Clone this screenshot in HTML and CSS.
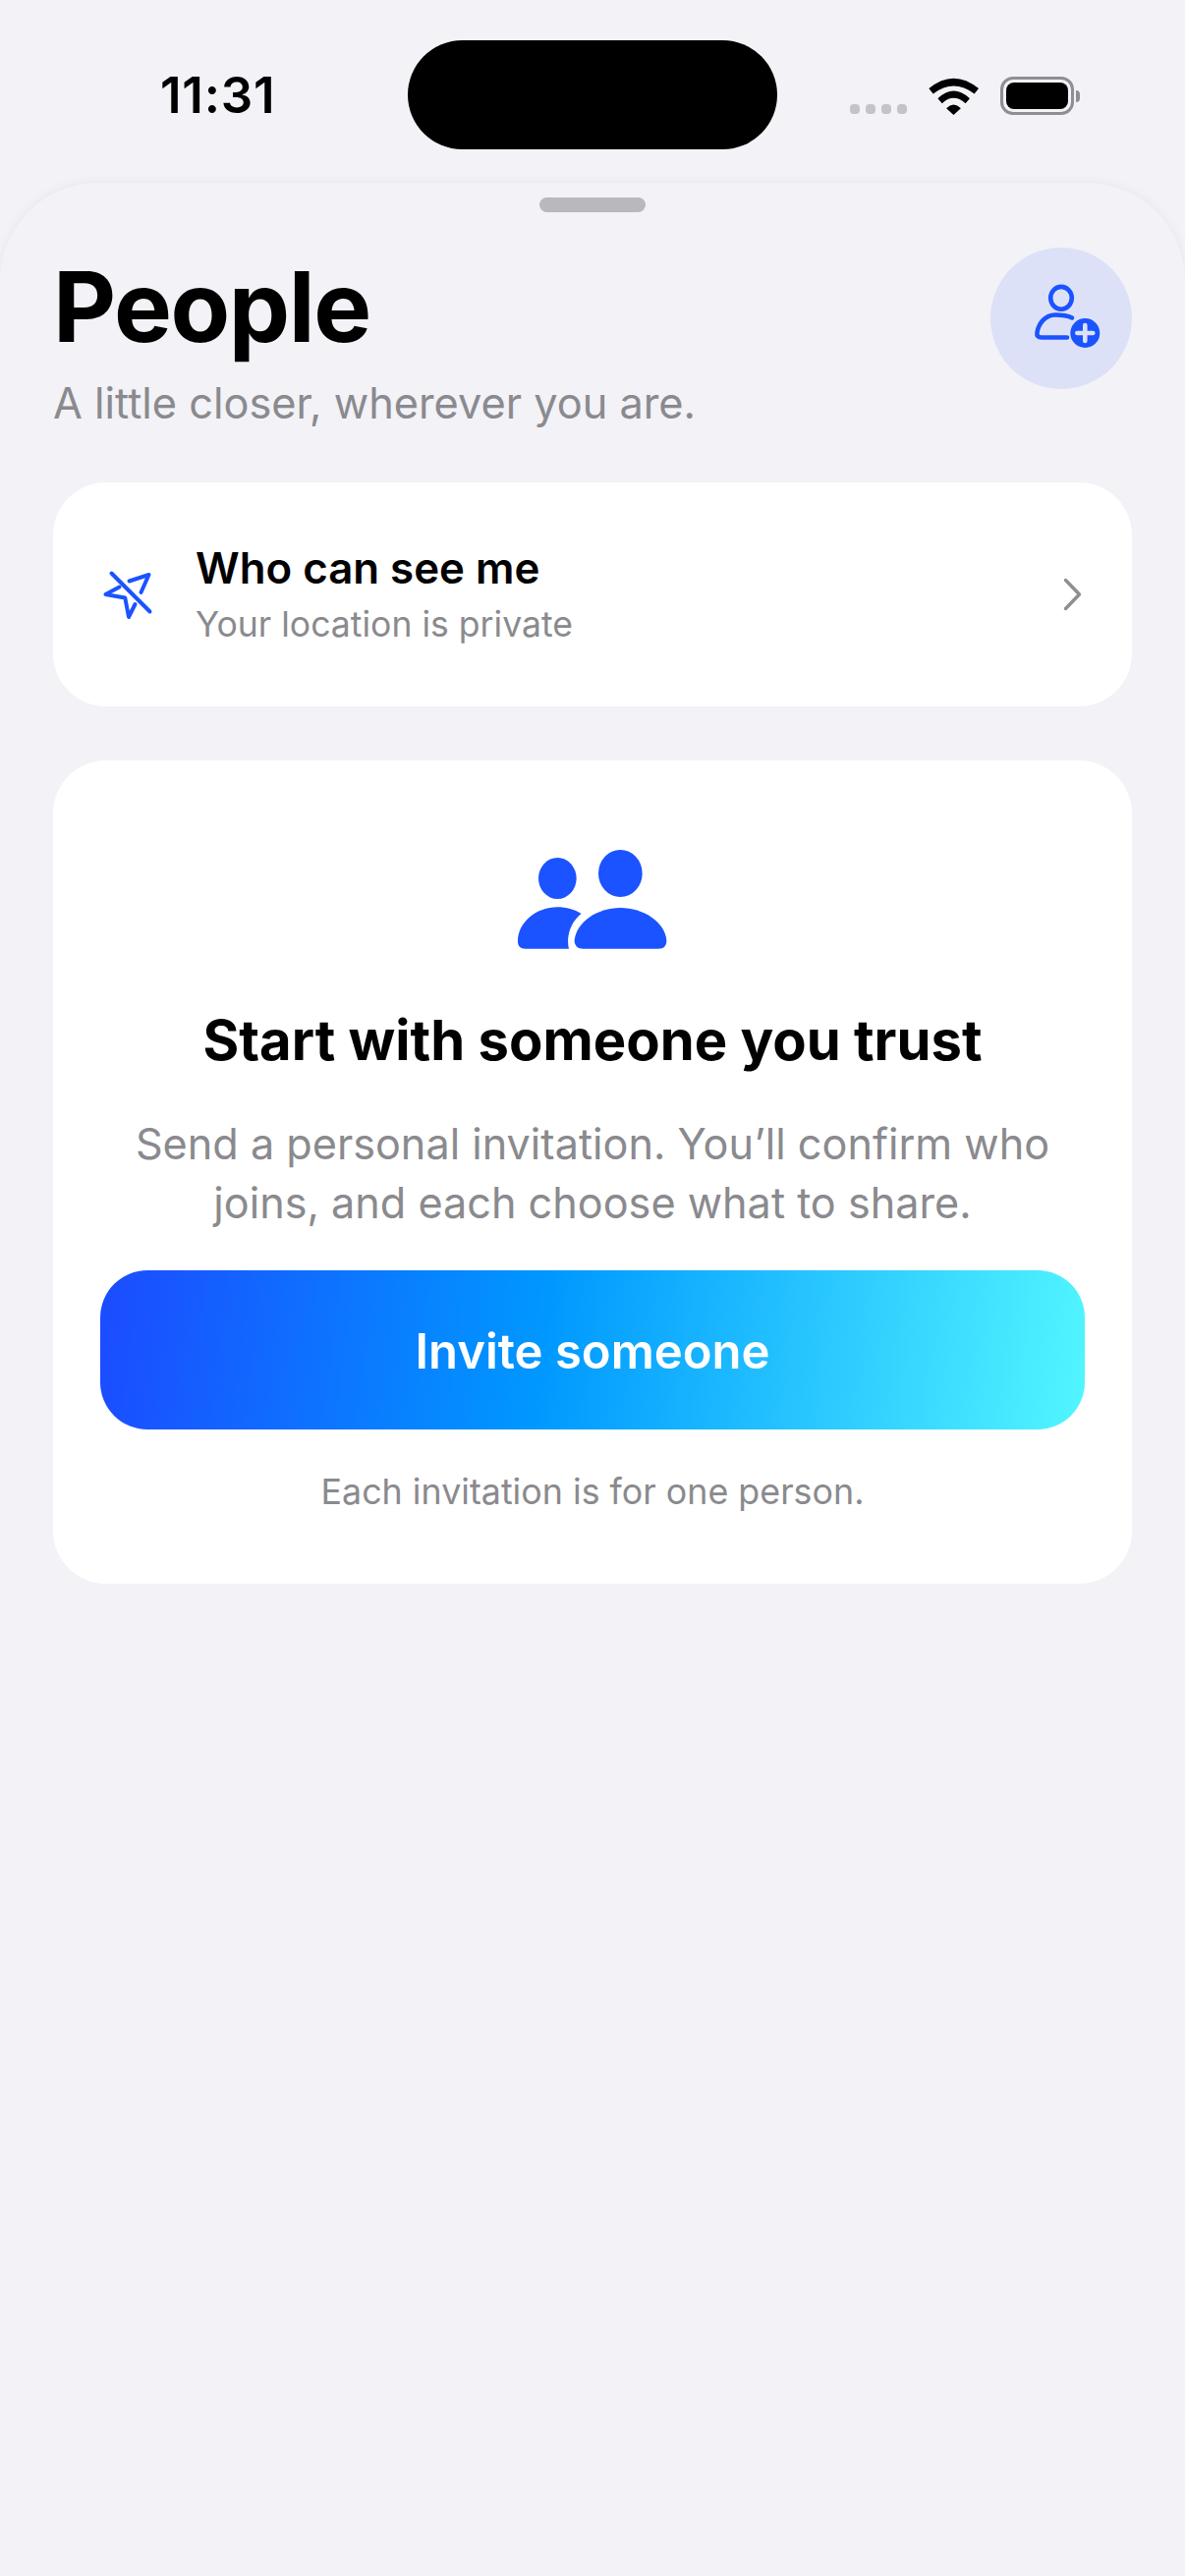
FILE: index.html
```html
<!DOCTYPE html>
<html lang="en">
<head>
  <meta charset="UTF-8">
  <title>People</title>
  <link rel="stylesheet" href="styles.css">
</head>
<body>

<!-- Status bar -->
<div class="status-bar">
  <div class="time">11:31</div>
  <div class="island"></div>
  <div class="status-icons">
    <div class="signal"><span></span><span></span><span></span><span></span></div>
    <svg class="wifi" width="51" height="38" viewBox="375 85 152 113">
      <path d="M376 118Q451 56 527 118L514 134Q451 86 389 134Z"/>
      <path d="M403 148Q451 102 500 148L487 163Q451 131 416 163Z"/>
      <path d="M429 178Q451 156 473 178L451 198Z"/>
    </svg>
    <div class="battery"><div class="battery-level"></div></div>
    <div class="battery-nub"></div>
  </div>
</div>

<!-- Sheet -->
<div class="sheet">
  <div class="handle"></div>

  <div class="header">
    <div>
      <h1>People</h1>
      <p class="tagline">A little closer, wherever you are.</p>
    </div>
    <button class="add-btn">
      <svg width="90" height="90" viewBox="0 0 90 90" fill="none" stroke="#1a53ff" stroke-width="4.6" stroke-linecap="round">
        <ellipse cx="45" cy="24.3" rx="10.8" ry="11.4"/>
        <path d="M56 44.5C50 41.5 44 41.5 39 41.5C29 41.5 22 50 20.5 59.5C20 63 21.5 64.5 25 64.5H51"/>
        <circle cx="69.3" cy="60" r="15" fill="#1a53ff" stroke="none"/>
        <path d="M69.3 52V68M61.3 60H77.3" stroke="#dde1f7"/>
      </svg>
    </button>
  </div>

  <div class="card privacy">
    <svg class="privacy-icon" width="60" height="60" viewBox="0 0 60 60" fill="none" stroke="#1a53ff" stroke-width="4" stroke-linecap="round" stroke-linejoin="round">
      <path d="M13.5 8.5L52.5 47.5"/>
      <path d="M7.5 30L21.5 22.5M31.5 16.5L51.5 10L43.5 28M37.5 40L31 53L27.3 33.5L7.5 30"/>
    </svg>
    <div class="privacy-text">
      <div class="privacy-title">Who can see me</div>
      <div class="privacy-sub">Your location is private</div>
    </div>
    <svg class="chevron" width="20" height="34" viewBox="0 0 20 34" fill="none" stroke="#8e8e93" stroke-width="3.4" stroke-linecap="round" stroke-linejoin="round">
      <path d="M2.5 2.5L16.5 17L2.5 31.5"/>
    </svg>
  </div>

  <div class="card invite">
    <svg class="people-icon" width="160" height="110" viewBox="100 60 480 330" fill="#1a53ff">
      <ellipse cx="233" cy="162" rx="58" ry="63"/>
      <ellipse cx="425" cy="147" rx="67" ry="72"/>
      <path d="M112 355C112 295 170 250 233 250C260 250 285 257 306 270C280 290 258 330 268 377H135C120 377 112 370 112 355Z"/>
      <path d="M285 350C292 295 355 252 425 252C495 252 560 295 566 350C567 367 558 377 540 377H312C295 377 284 367 285 350Z"/>
    </svg>
    <h2>Start with someone you trust</h2>
    <p class="invite-desc">Send a personal invitation. You’ll confirm who joins, and each choose what to share.</p>
    <button class="invite-btn">Invite someone</button>
    <p class="invite-note">Each invitation is for one person.</p>
  </div>
</div>

</body>
</html>
```

FILE: styles.css
```css
body {
  font-family: "Inter", "Liberation Sans", sans-serif;
  background-color: #f2f2f7;
  margin: 0;
  padding: 0;
  height: 2622px;
  overflow: hidden;
}

.status-bar {
  display: grid;
  grid-template-columns: 415px 376px 1fr;
  align-items: center;
  height: 186px;
  box-sizing: border-box;
  padding: 41px 0 34px;
}

.time {
  font-size: 51px;
  font-weight: 600;
  letter-spacing: 0.8px;
  padding-left: 163px;
  color: #000;
}

.island {
  height: 111px;
  background-color: #000;
  border-radius: 56px;
}

.status-icons {
  display: flex;
  align-items: flex-end;
  padding-left: 74px;
  padding-top: 2px;
}

.signal {
  display: flex;
  gap: 6px;
  margin-bottom: 1px;
}

.signal span {
  width: 10px;
  height: 10px;
  border-radius: 4px;
  background-color: #c4c4c8;
}

.wifi {
  margin-left: 22px;
  fill: #000;
  display: block;
}

.battery {
  width: 75px;
  height: 39px;
  box-sizing: border-box;
  margin-left: 22px;
  padding: 3px;
  border: 3px solid #8e8e93;
  border-radius: 13px;
}

.battery-level {
  height: 100%;
  background-color: #000;
  border-radius: 8px;
}

.battery-nub {
  width: 4px;
  height: 12px;
  margin: 0 0 13px 2px;
  background-color: #8e8e93;
  border-radius: 0 4px 4px 0;
}

.sheet {
  background-color: #f2f2f7;
  border-radius: 100px 100px 0 0;
  box-shadow: 0 -1px 12px rgba(0, 0, 0, 0.05);
  padding: 15px 54px 0;
  height: 2436px;
  box-sizing: border-box;
}

.handle {
  width: 108px;
  height: 15px;
  margin: 0 auto 36px;
  background-color: #b8b8bd;
  border-radius: 8px;
}

.header {
  display: flex;
  justify-content: space-between;
  align-items: flex-start;
  height: 239px;
}

h1 {
  margin: 0;
  font-size: 99px;
  font-weight: 700;
  line-height: 120px;
  letter-spacing: -1.4px;
  color: #000;
}

.tagline {
  margin: 10px 0 0;
  font-size: 43.3px;
  line-height: 56px;
  color: #8a8a8e;
}

.add-btn {
  width: 144px;
  height: 144px;
  padding: 0;
  border: none;
  border-radius: 50%;
  background-color: #dde1f7;
  display: flex;
  align-items: center;
  justify-content: center;
}

.card {
  background-color: white;
  border-radius: 54px;
}

.privacy {
  display: flex;
  align-items: center;
  height: 228px;
  padding: 0 50px 0 46px;
  box-sizing: border-box;
}

.privacy-text {
  flex: 1;
  margin-left: 39px;
}

.privacy-title {
  font-size: 43.8px;
  font-weight: 600;
  line-height: 54px;
  color: #000;
}

.privacy-sub {
  margin-top: 7px;
  font-size: 35.6px;
  line-height: 46px;
  color: #8a8a8e;
}

.invite {
  margin-top: 55px;
  height: 838px;
  box-sizing: border-box;
  padding: 86px 48px 0;
  text-align: center;
}

.people-icon {
  display: block;
  margin: 0 auto;
}

.invite h2 {
  margin: 54px 0 0;
  font-size: 56.2px;
  font-weight: 700;
  line-height: 70px;
  color: #000;
}

.invite-desc {
  margin: 40px 0 0;
  font-size: 43.2px;
  line-height: 60px;
  color: #8a8a8e;
}

.invite-btn {
  display: block;
  width: 100%;
  height: 162px;
  margin-top: 39px;
  padding: 2px 0 0;
  border: none;
  border-radius: 48px;
  background: linear-gradient(97deg, #1c4bff 0%, #0098ff 45%, #52f6ff 100%);
  color: white;
  font-family: inherit;
  font-size: 49px;
  font-weight: 600;
}

.invite-note {
  margin: 40px 0 0;
  font-size: 35.8px;
  line-height: 46px;
  color: #8a8a8e;
}
```
